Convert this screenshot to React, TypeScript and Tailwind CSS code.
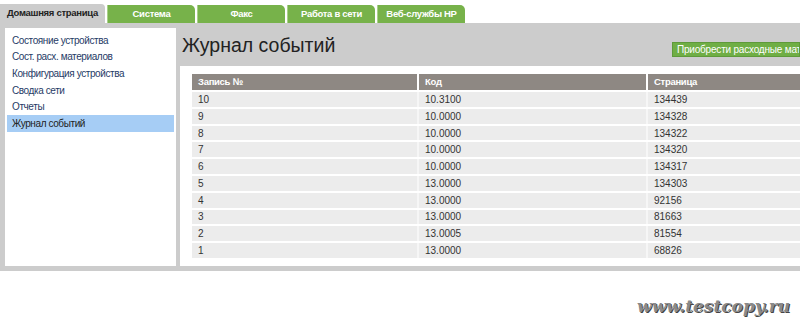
const tabs = ["Система", "Факс", "Работа в сети", "Веб-службы HP"];

const menu = [
  "Состояние устройства",
  "Сост. расх. материалов",
  "Конфигурация устройства",
  "Сводка сети",
  "Отчеты",
  "Журнал событий",
];

const events = [
  { id: "10", code: "10.3100", page: "134439" },
  { id: "9", code: "10.0000", page: "134328" },
  { id: "8", code: "10.0000", page: "134322" },
  { id: "7", code: "10.0000", page: "134320" },
  { id: "6", code: "10.0000", page: "134317" },
  { id: "5", code: "13.0000", page: "134303" },
  { id: "4", code: "13.0000", page: "92156" },
  { id: "3", code: "13.0000", page: "81663" },
  { id: "2", code: "13.0005", page: "81554" },
  { id: "1", code: "13.0000", page: "68826" },
];

export default function App() {
  return (
    <div className="w-[800px] h-[329px] bg-white overflow-hidden font-['Liberation_Sans',Arial,sans-serif] text-[#333]">
      {/* Tabs */}
      <div className="flex items-end h-[23px] pt-[4px]">
        <div className="w-[105px] h-[19px] bg-[#cccccc] flex items-center pl-[7px] text-[9.5px] tracking-[-0.3px] font-bold text-[#222] whitespace-nowrap rounded-tr-[4px]">
          Домашняя страница
        </div>
        {tabs.map((t) => (
          <div
            key={t}
            className="ml-[2px] w-[88px] h-[18px] bg-[#77b24a] border-l border-[#a9d08a] flex items-center justify-center text-[9.5px] tracking-[-0.3px] font-bold text-white whitespace-nowrap rounded-tr-[5px]"
          >
            {t}
          </div>
        ))}
      </div>

      {/* Gray body */}
      <div className="bg-[#cccccc] flex pt-[5px] pb-[5px] pl-[5px] h-[248px]">
        {/* Sidebar */}
        <div className="w-[171px] bg-white pt-[4px] px-[2px] shrink-0">
          {menu.map((m, i) => (
            <div
              key={m}
              className={`h-[16.6px] flex items-center pl-[5px] text-[10px] tracking-[-0.4px] whitespace-nowrap ${
                i === menu.length - 1 ? "bg-[#a6cdf5] text-[#222]" : "text-[#1f3b66]"
              }`}
            >
              {m}
            </div>
          ))}
        </div>

        {/* Main */}
        <div className="flex-1 ml-[4px] flex flex-col min-w-0">
          <div className="h-[38px] flex items-start justify-between">
            <h1 className="text-[19.5px] text-[#222] pl-[2px] pt-[8px] leading-none whitespace-nowrap">Журнал событий</h1>
            <div className="mt-[14px] h-[15px] bg-[#6fae45] border border-[#5e9a3a] pl-[4px] text-[10px] tracking-[-0.2px] text-white whitespace-nowrap w-[128px] overflow-hidden leading-[13px]">
              Приобрести расходные мате
            </div>
          </div>
          <div className="flex-1 bg-white pt-[8px] pl-[12px] overflow-hidden">
            <div className="w-[700px]">
              <div className="flex h-[16px] bg-[#8e8883] text-[9.5px] tracking-[-0.3px] font-bold text-white">
                <div className="w-[225px] pl-[6px] flex items-center">Запись №</div>
                <div className="w-[229px] pl-[6px] flex items-center border-l-2 border-white">Код</div>
                <div className="flex-1 pl-[6px] flex items-center border-l-2 border-white">Страница</div>
              </div>
              {events.map((e) => (
                <div key={e.id} className="flex h-[16.8px] border-t-2 border-white bg-[#ececec] text-[10px] text-[#333]">
                  <div className="w-[225px] pl-[6px] flex items-center">{e.id}</div>
                  <div className="w-[229px] pl-[6px] flex items-center border-l-2 border-[#f6f6f6]">{e.code}</div>
                  <div className="flex-1 pl-[6px] flex items-center border-l-2 border-[#f6f6f6]">{e.page}</div>
                </div>
              ))}
            </div>
          </div>
        </div>
      </div>

      {/* Watermark */}
      <div className="flex justify-end pr-[10px] pt-[27px]">
        <span className="font-['DejaVu_Serif',serif] italic font-bold text-[17px] leading-none text-[#8a8a8a] [text-shadow:1px_1px_0_#444]">
          www.testcopy.ru
        </span>
      </div>
    </div>
  );
}
